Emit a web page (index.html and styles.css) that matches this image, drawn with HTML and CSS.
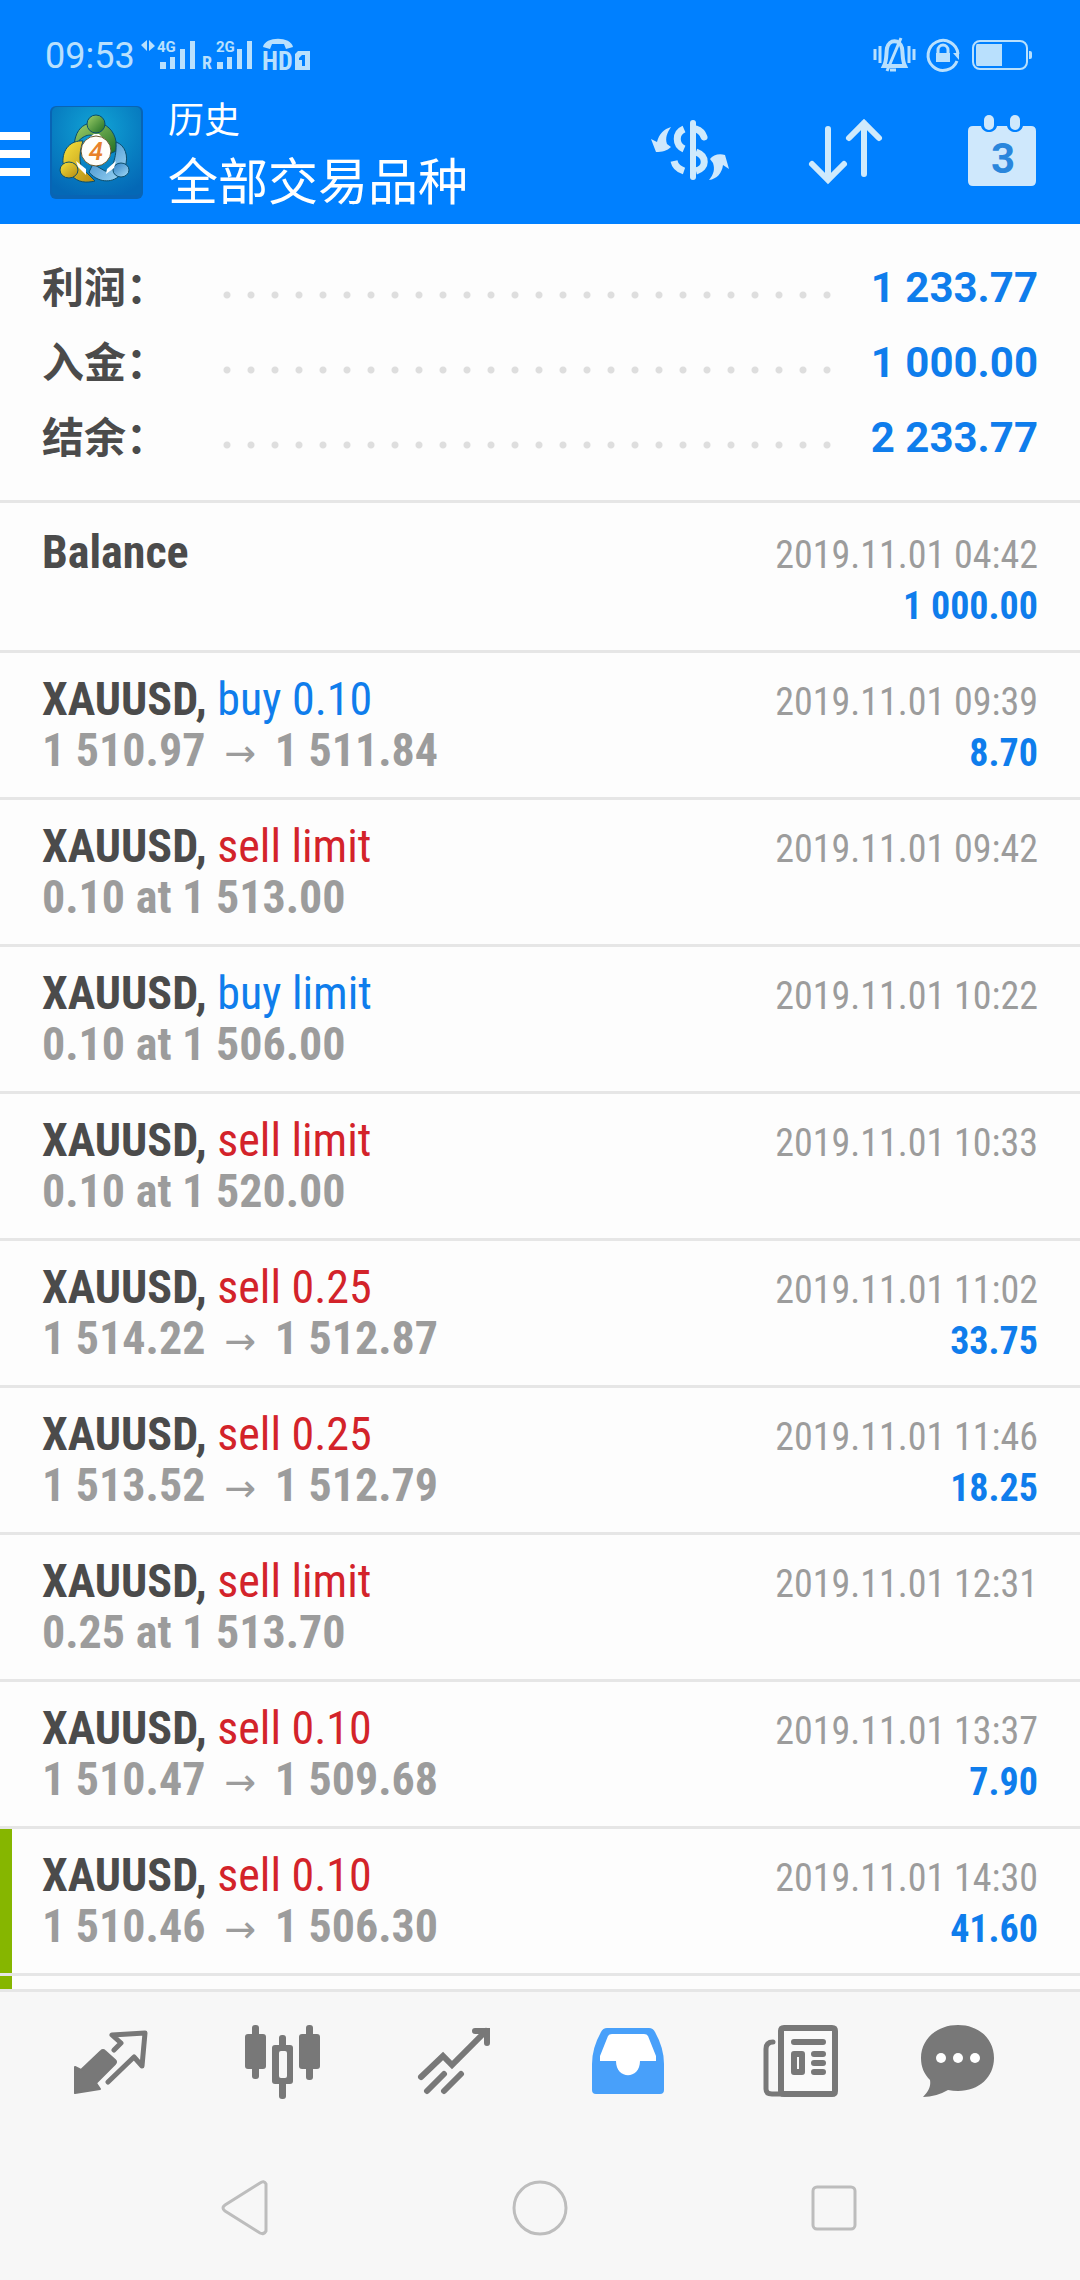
FILE: index.html
```html
<!DOCTYPE html>
<html lang="zh-CN">
<head>
<meta charset="utf-8">
<meta name="viewport" content="width=device-width">
<title>历史</title>
<link rel="stylesheet" href="styles.css">
</head>
<body>
<header class="header">
  <div class="status">
    <span class="clock">09:53</span>
    <svg class="signals" width="174" height="40" viewBox="138 34 174 40" aria-hidden="true">
      <path d="M147 40v11l-6-6zM149 51V40l6 6z"/>
      <text x="157" y="52" class="net">4G</text>
      <path d="M160 62h6v7h-6zM170 57h5v12h-5zM180 49h5v20h-5zM190 41h5v28h-5z"/>
      <text x="202" y="69" class="roam">R</text>
      <text x="216" y="52" class="net">2G</text>
      <path d="M217 62h6v7h-6zM227 57h5v12h-5zM237 49h5v20h-5zM247 41h5v28h-5z"/>
      <path d="M263 47c2-11 28-11 30 0l-7 2-2-5h-12l-2 5z"/>
      <text x="262" y="70" class="hd">HD</text>
      <path fill-rule="evenodd" d="M298 51h12v19h-15V54zM302 55l-3 3v2h3v6h3V55z"/>
    </svg>
    <svg class="state" width="160" height="40" viewBox="872 34 160 40" aria-hidden="true">
      <g fill="none" stroke="#b9e0fd">
        <path stroke-width="3" d="M875 49v11M880 46v17M909 46v17M914 49v11"/>
        <path stroke-width="4" d="M884 66h21c-3-6-2-12-3-18-2-9-13-9-15 0-1 6 0 12-3 18z"/>
        <path stroke-width="3" d="M901 38l-14 33M890 70h6"/>
        <path stroke-width="3" d="M957 61a15 15 0 1 1 1-7"/>
        <path stroke-width="3" d="M938 54v-4a5 5 0 0 1 10 0v4"/>
        <rect x="973" y="41" width="54" height="28" rx="7" stroke-width="2"/>
      </g>
      <path d="M936 53h14v9h-14zM953 53h6v7zM977 44h25v22h-25q-1 0-1-3V47q0-3 1-3zM1029 51h1q2 0 2 2v4q0 2-2 2h-1z"/>
    </svg>
  </div>
  <div class="appbar">
    <button class="menu" aria-label="菜单"><span></span><span></span><span></span></button>
    <svg class="logo" width="96" height="98" viewBox="0 0 96 98" role="img" aria-label="MetaTrader 4">
      <defs>
        <radialGradient id="tile" cx=".5" cy=".25" r=".8"><stop offset="0" stop-color="#11a5d6"/><stop offset=".6" stop-color="#087fc2"/><stop offset="1" stop-color="#0468b6"/></radialGradient>
        <linearGradient id="green" x2="1" y2="1"><stop offset="0" stop-color="#9fd06a"/><stop offset="1" stop-color="#1c6c22"/></linearGradient>
        <linearGradient id="gold" x2="1" y2="1"><stop offset="0" stop-color="#f7e23c"/><stop offset="1" stop-color="#b48a12"/></linearGradient>
        <linearGradient id="sky" x2="1" y2="1"><stop offset="0" stop-color="#2d7fc4"/><stop offset="1" stop-color="#a4dcf8"/></linearGradient>
      </defs>
      <rect x="2" y="3" width="93" height="93" rx="6" fill="#0864b4"/>
      <rect x="4" y="4" width="89" height="88" rx="5" fill="url(#tile)"/>
      <g stroke="#0b4d6b" stroke-width="1">
        <path fill="url(#green)" d="M26 43c1-14 7-20 13-22l16 0c9 4 15 14 13 27l-9 4-10-18c-8-4-14-2-23 9z"/>
        <path fill="url(#gold)" d="M35 38c-12-1-21 8-20 22l8 12c7 8 16 8 24 6l-8-8c-8-3-9-18-4-32z"/>
        <path fill="url(#sky)" d="M68 39c9 3 13 14 9 25l-7 10c-9 7-22 4-29-5l4-8 12 7c7 2 12-15 11-29z"/>
        <circle cx="48" cy="21" r="9" fill="url(#green)"/>
        <ellipse cx="21" cy="67" rx="9" ry="8" fill="url(#gold)"/>
        <ellipse cx="73" cy="67" rx="8" ry="7" fill="url(#sky)"/>
      </g>
      <path fill="#fff" d="M42 34l4-3h5l5 5zM28 58l10 8v6l-8-8zM68 58l-9 8-1 5 8-6z"/>
      <circle cx="48" cy="48" r="15" fill="#fffefa" stroke="#6b5a30"/>
      <text x="48" y="57" class="four">4</text>
    </svg>
    <div class="titles">
      <h1>历史</h1>
      <p>全部交易品种</p>
    </div>
    <div class="actions">
      <button aria-label="货币">
        <svg width="84" height="76" viewBox="648 114 84 76">
          <path d="M651 139l6 3c2-8 7-13 14-15-4 6-6 11-4 17l4 3c-4 4-9 5-15 5z"/>
          <path d="M729 169l-6-4c-1 8-6 14-14 15 5-6 6-11 4-17l-3-4c3-4 9-6 15-4z"/>
          <g fill="none" stroke="#cfeafc" stroke-width="7">
            <path d="M684 129c-9 4-9 16 0 20M674 161c1 5 4 8 10 10"/>
            <path stroke-linecap="round" stroke-width="6" d="M693 123v54"/>
            <path stroke-linecap="round" d="M696 129q6 2 8 8"/>
            <path d="M696 152c11 4 11 16 0 19"/>
          </g>
        </svg>
      </button>
      <button aria-label="排序">
        <svg width="84" height="76" viewBox="804 114 84 76" class="line">
          <path d="M828 129v50M812 164l16 16 16-16M864 174v-51M849 138l15-15 15 15"/>
        </svg>
      </button>
      <button aria-label="日期">
        <svg width="84" height="76" viewBox="960 114 84 76">
          <path d="M973 126h8c2 8 14 8 16 0h10c2 8 14 8 16 0h8q5 0 5 5v50q0 5-5 5h-58q-5 0-5-5v-50q0-5 5-5z"/>
          <rect x="984" y="115" width="10" height="15" rx="5"/>
          <rect x="1010" y="115" width="10" height="15" rx="5"/>
          <text x="1003" y="173" class="day">3</text>
        </svg>
      </button>
    </div>
  </div>
</header>

<main class="content">
  <dl class="summary">
    <div><dt>利润：</dt><dd>1 233.77</dd></div>
    <div><dt>入金：</dt><dd>1 000.00</dd></div>
    <div><dt>结余：</dt><dd>2 233.77</dd></div>
  </dl>
  <ul class="deals">
    <li class="balance"><b>Balance</b><time>2019.11.01 04:42</time><strong>1 000.00</strong></li>
    <li><b>XAUUSD, <span class="buy">buy 0.10</span></b><time>2019.11.01 09:39</time><i>1 510.97 <span class="arrow">→</span> 1 511.84</i><strong>8.70</strong></li>
    <li><b>XAUUSD, <span class="sell">sell limit</span></b><time>2019.11.01 09:42</time><i>0.10 at 1 513.00</i></li>
    <li><b>XAUUSD, <span class="buy">buy limit</span></b><time>2019.11.01 10:22</time><i>0.10 at 1 506.00</i></li>
    <li><b>XAUUSD, <span class="sell">sell limit</span></b><time>2019.11.01 10:33</time><i>0.10 at 1 520.00</i></li>
    <li><b>XAUUSD, <span class="sell">sell 0.25</span></b><time>2019.11.01 11:02</time><i>1 514.22 <span class="arrow">→</span> 1 512.87</i><strong>33.75</strong></li>
    <li><b>XAUUSD, <span class="sell">sell 0.25</span></b><time>2019.11.01 11:46</time><i>1 513.52 <span class="arrow">→</span> 1 512.79</i><strong>18.25</strong></li>
    <li><b>XAUUSD, <span class="sell">sell limit</span></b><time>2019.11.01 12:31</time><i>0.25 at 1 513.70</i></li>
    <li><b>XAUUSD, <span class="sell">sell 0.10</span></b><time>2019.11.01 13:37</time><i>1 510.47 <span class="arrow">→</span> 1 509.68</i><strong>7.90</strong></li>
    <li class="marked"><b>XAUUSD, <span class="sell">sell 0.10</span></b><time>2019.11.01 14:30</time><i>1 510.46 <span class="arrow">→</span> 1 506.30</i><strong>41.60</strong></li>
    <li class="marked"></li>
  </ul>
</main>

<footer class="footer">
  <nav class="tabs">
    <button aria-label="行情">
      <svg width="96" height="96" viewBox="62 2014 96 96">
        <path stroke="#787878" stroke-width="2" stroke-linejoin="round" d="M75 2067l6 3 20-19q2-2 4 0l10 9q2 2 0 4l-19 19 4 6-25 4z"/>
        <path class="outline" d="M114 2050l7-7-9-8 33-2-3 33-8-9-26 25"/>
      </svg>
    </button>
    <button aria-label="图表">
      <svg width="96" height="96" viewBox="234 2014 96 96">
        <rect x="244" y="2034" width="21" height="35" rx="3"/><rect x="251" y="2025" width="7" height="54" rx="3"/>
        <rect x="298" y="2034" width="21" height="35" rx="3"/><rect x="305" y="2025" width="7" height="55" rx="3"/>
        <rect x="278" y="2035" width="7" height="64" rx="3"/><rect x="271" y="2045" width="21" height="39" rx="3"/>
        <rect x="278" y="2051" width="8" height="27" rx="2" fill="#f7f7f7"/>
      </svg>
    </button>
    <button aria-label="交易">
      <svg width="96" height="96" viewBox="406 2014 96 96">
        <g fill="none" stroke="#787878" stroke-width="6" stroke-linecap="round" stroke-linejoin="miter">
          <path d="M420 2077l22-21 9 9 34-34M474 2031h12v12M426 2091l17-17M443 2091l17-17"/>
        </g>
      </svg>
    </button>
    <button aria-label="历史" aria-current="page">
      <svg width="96" height="96" viewBox="579 2014 96 96">
        <path fill="#48a0fa" d="M606 2028h42q4 0 6 4 9 16 9 32v26q0 4-4 4h-64q-4 0-4-4v-26q0-16 9-32 2-4 6-4z"/>
        <path fill="#fff" d="M611 2034h32q3 0 4 2l8 20v5h-16c0 19-24 19-24 0h-16v-5l8-20q1-2 4-2z"/>
      </svg>
    </button>
    <button aria-label="新闻">
      <svg width="96" height="96" viewBox="752 2014 96 96">
        <path fill="#fafafa" stroke="#787878" stroke-width="6" stroke-linejoin="round" d="M781 2031q0-3 3-3h48q3 0 3 3v60q0 3-3 3h-48q-3 0-3-3z"/>
        <path class="outline" d="M773 2042q-7 0-7 7v40q0 5 6 5h10"/>
        <path fill="none" stroke="#787878" stroke-width="6" stroke-linecap="round" d="M794 2042h29M814 2054h9M814 2063h9M814 2072h9"/>
        <rect x="794" y="2054" width="8" height="18" fill="#fafafa" stroke="#787878" stroke-width="6" stroke-linejoin="round"/>
      </svg>
    </button>
    <button aria-label="消息">
      <svg width="96" height="96" viewBox="910 2014 96 96">
        <path d="M958 2025c21 0 36 14 36 33s-15 33-36 33q-5 0-10-1-12 7-25 7c6-6 8-11 7-17-6-6-9-13-9-22 0-19 16-33 37-33z"/>
        <g fill="#fff"><circle cx="941" cy="2058" r="5"/><circle cx="958" cy="2058" r="5"/><circle cx="975" cy="2058" r="5"/></g>
      </svg>
    </button>
  </nav>
  <nav class="system">
    <button aria-label="返回"><svg width="62" height="62" viewBox="0 0 62 62"><path d="M51 7v47q-2 4-6 2L10 34q-4-3 0-6L45 6q4-3 6 1z"/></svg></button>
    <button aria-label="主屏幕"><svg width="62" height="62" viewBox="0 0 62 62"><circle cx="31" cy="31" r="26"/></svg></button>
    <button aria-label="最近任务"><svg width="62" height="62" viewBox="0 0 62 62"><rect x="10" y="10" width="42" height="42" rx="4"/></svg></button>
  </nav>
</footer>
</body>
</html>
```
FILE: styles.css
```css
* { box-sizing: border-box; }

body {
  margin: 0;
  height: 100vh;
  display: flex;
  flex-direction: column;
  background: #fdfdfd;
  color: #4b4b4b;
  font-family: "Roboto Condensed", Roboto, "Noto Sans CJK SC", sans-serif;
}

h1, p, ul, dl, dd { margin: 0; padding: 0; }
ul { list-style: none; }
svg { display: block; overflow: visible; }

button {
  display: flex;
  align-items: center;
  justify-content: center;
  margin: 0;
  padding: 0;
  border: 0;
  background: none;
}

/* Header */
.header {
  flex: none;
  background: #0080ff;
  color: #fff;
}

.status {
  display: flex;
  align-items: center;
  height: 80px;
  padding: 28px 48px 0 45px;
  color: #b9e0fd;
  fill: #b9e0fd;
}

.clock {
  width: 93px;
  padding-top: 4px;
  font-family: Roboto, sans-serif;
  font-size: 36px;
  line-height: 48px;
}
.state { margin-left: auto; }
.net { font: 700 15px Roboto, sans-serif; }
.roam { font: 700 18px "Roboto Condensed", sans-serif; }
.hd { font: 700 26px "Roboto Condensed", sans-serif; }

.appbar {
  display: flex;
  height: 144px;
}

.menu {
  flex-direction: column;
  gap: 10px;
  width: 30px;
  height: 148px;
}
.menu span {
  width: 30px;
  height: 8px;
  background: #fff;
}

.logo { margin: 23px 24px 0 18px; }
.four {
  fill: #e8822a;
  font: italic 500 26px Roboto, sans-serif;
  text-anchor: middle;
}

.titles {
  flex: 1;
  padding-top: 12px;
  font-family: "Noto Sans CJK SC", sans-serif;
  white-space: nowrap;
}
.titles h1 {
  font-size: 36px;
  font-weight: 400;
  line-height: 50px;
}
.titles p {
  font-size: 50px;
  line-height: 72px;
}

.actions { display: flex; }
.actions button {
  width: 156px;
  fill: #cfe8fc;
}
.line {
  fill: none;
  stroke: #cfeafc;
  stroke-width: 6px;
  stroke-linecap: round;
}
.day {
  fill: #2a86dc;
  font: 700 42px Roboto, sans-serif;
  text-anchor: middle;
}

/* Account summary */
.content {
  flex: 1 1 0;
  min-height: 0;
  overflow-y: auto;
  scrollbar-width: none;
}

.summary {
  padding: 26px 42px 25px;
  border-bottom: 3px solid #e6e6e6;
}
.summary div {
  display: flex;
  align-items: center;
  height: 75px;
  font-size: 42px;
}
.summary dt {
  width: 180px;
  padding-bottom: 6px;
  font-family: "Noto Sans CJK SC", sans-serif;
  font-weight: 700;
}
.summary dd {
  display: flex;
  flex: 1;
  align-items: center;
  justify-content: space-between;
  color: #0f7dec;
  font-family: Roboto, sans-serif;
  font-weight: 700;
  white-space: nowrap;
}
.summary dd::before {
  content: "";
  width: 612px;
  height: 8px;
  margin-top: 14px;
  background: radial-gradient(circle at 5px 4px, #dedede 3px, transparent 4px) 0 0 / 24px 8px;
}

/* Deals */
.deals li {
  display: grid;
  grid-template-columns: 1fr auto;
  grid-auto-rows: 51px;
  height: 147px;
  padding: 21px 42px;
  border-bottom: 3px solid #e6e6e6;
  line-height: 51px;
  white-space: nowrap;
}
.deals .balance {
  height: 150px;
  padding-top: 24px;
}
.deals b, .deals i {
  grid-column: 1;
  font-size: 46px;
  font-style: normal;
  font-weight: 700;
}
.deals i { color: #9c9c9c; }
.deals time, .deals strong {
  grid-column: 2;
  font-size: 38px;
  line-height: 57px;
  text-align: right;
}
.deals time { color: #9c9c9c; }
.deals strong { color: #0f7dec; }
.deals span { font-weight: 400; }
.deals .buy { color: #0f7dec; }
.deals .sell { color: #d3232a; }
.deals .arrow {
  display: inline-block;
  width: 48px;
  font-family: "DejaVu Sans", sans-serif;
  font-size: 38px;
  line-height: 40px;
  text-align: center;
}
.deals .marked {
  background: linear-gradient(to right, #86b600 12px, transparent 12px) padding-box;
}

/* Bottom bars */
.footer {
  flex: none;
  background: #f7f7f7;
  border-top: 3px solid #e6e6e6;
}
.tabs {
  display: grid;
  grid-template-columns: repeat(5, 173fr) 144fr;
  padding: 22px 50px 28px 24px;
  fill: #787878;
}
.outline {
  fill: none;
  stroke: #787878;
  stroke-width: 5px;
  stroke-linecap: round;
  stroke-linejoin: round;
}
.system {
  display: grid;
  grid-template-columns: 1fr 1fr 1fr;
  padding: 39px 99px 41px;
  fill: none;
  stroke: #bdbdbd;
  stroke-width: 3px;
}
```
